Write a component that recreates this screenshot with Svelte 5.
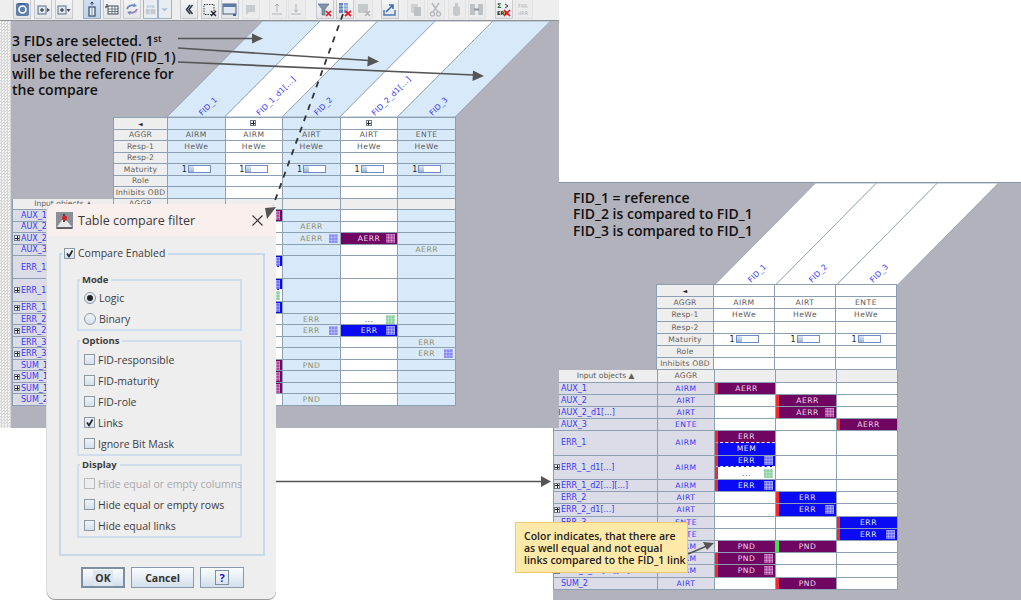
<script>
  const toolbar = [
    { x: 2, svg: `<rect x="1" y="1" width="13" height="13" rx="2" fill="#5d7ea8"/><circle cx="7.5" cy="7.5" r="3.5" fill="none" stroke="#fff" stroke-width="1.6"/><path d="M3 2h7" stroke="#33507a"/>` },
    { x: 3, svg: `<rect x="2" y="4" width="8" height="8" fill="#dfe6f0" stroke="#5a6f8c"/><path d="M4 8h4M6 6v4" stroke="#223"/><path d="M11 6l3 2-3 2z" fill="#445"/>` },
    { x: 2.5, svg: `<rect x="2" y="4" width="8" height="8" fill="#dfe6f0" stroke="#5a6f8c"/><path d="M4 8h4M6 6v4" stroke="#223"/><path d="M10.500 7h4l-2 3z" fill="#445"/>` },
    { x: 10, on: true, svg: `<rect x="5" y="5" width="6" height="9" fill="#e6edf6" stroke="#45566e" stroke-width="1.300"/><path d="M8 5v9" stroke="#7f92ab"/><path d="M8 0v3M6.500 1.500L8 0l1.500 1.500" stroke="#26364a" fill="none"/>` },
    { x: 2, svg: `<rect x="4" y="4" width="10" height="8" fill="#fff" stroke="#3c4c60"/><path d="M4 7h10M4 9.500h10M8 4v8M11 4v8" stroke="#3c4c60" stroke-width=".7"/><path d="M3 2v3H1" stroke="#222" fill="none"/>` },
    { x: 2, svg: `<path d="M3 7c1-3 5-5 8-3" fill="none" stroke="#6f8fc0" stroke-width="2"/><path d="M13 7c-1 3-5 5-8 3" fill="none" stroke="#9a85b8" stroke-width="2"/><path d="M10 1l3 3-4 1zM6 13l-3-3 4-1z" fill="#6f8fc0"/>` },
    { x: 2, w: 15, tint: true, svg: `<text x="7.500" y="5.500" font-size="4.500" font-family="DejaVu Sans" text-anchor="middle" fill="#aab">SYN</text><rect x="2" y="7" width="11" height="6" fill="#c4cad0"/><path d="M7 7v6" stroke="#e6e9ec"/>` },
    { x: 0, w: 14, tint: true, svg: `<path d="M3 6h8l-4 4z" fill="#a9c4de"/>` },
    { x: 8, svg: `<path d="M9 3L5.500 7.500l3.500 4.500M11.500 3L8 7.500l3.500 4.500" fill="none" stroke="#2d3542" stroke-width="1.500"/>` },
    { x: 3, svg: `<rect x="2" y="2.500" width="10" height="10" fill="none" stroke="#344" stroke-dasharray="1.500 1"/><path d="M9 9l5 5M14 9l-5 5" stroke="#223" stroke-width="1.400"/>` },
    { x: 2, svg: `<rect x="1" y="2" width="13" height="10" fill="#dfe8f2" stroke="#4a5f7c"/><rect x="1" y="2" width="13" height="3" fill="#5a7ba6"/><path d="M11 12h3v2h-3z" fill="#2a66bb"/>` },
    { x: 3, off: true, svg: `<path d="M3 3h9v7H6l-3 3z" fill="#c9cccf"/>` },
    { x: 9, off: true, svg: `<path d="M7 2v8M5 4l2-2 2 2M2 12h10" stroke="#aeb2b6" fill="none"/>` },
    { x: 1, off: true, svg: `<path d="M7 2v8M5 8l2 2 2-2M2 12h10" stroke="#aeb2b6" fill="none"/>` },
    { x: 10, svg: `<path d="M1 2h11L8 7v6H5V7z" fill="#7f93ad" stroke="#56677f" stroke-width=".6"/><path d="M9 9l5 5M14 9l-5 5" stroke="#e3192a" stroke-width="1.700"/>` },
    { x: 2, svg: `<rect x="2" y="1" width="4" height="10" fill="#5f86c4"/><rect x="7" y="1" width="4" height="10" fill="#8fa8cc"/><path d="M2 4h9M2 7h9" stroke="#fff" stroke-width=".6"/><path d="M8 9l6 5M14 9l-6 5" stroke="#e3192a" stroke-width="1.700"/>` },
    { x: 1, off: true, svg: `<rect x="2" y="2" width="10" height="9" fill="#c6c9cc"/><path d="M9 9l5 5M14 9l-5 5" stroke="#b4b4b8" stroke-width="1.600"/>` },
    { x: 8, svg: `<path d="M2 8v5h11V8" fill="none" stroke="#4d79b4" stroke-width="1.500"/><path d="M4 10l7-7M7 3h4v4" fill="none" stroke="#3b6cb0" stroke-width="1.600"/>` },
    { x: 8, off: true, svg: `<rect x="3" y="2" width="7" height="9" fill="#cfd2d5"/><rect x="6" y="5" width="7" height="9" fill="#bec1c4"/>` },
    { x: 2, off: true, svg: `<path d="M4 1l6 9M11 1L5 10" stroke="#b8bbbe" stroke-width="1.600"/><circle cx="4.500" cy="12" r="2" fill="none" stroke="#b8bbbe" stroke-width="1.400"/><circle cx="10.500" cy="12" r="2" fill="none" stroke="#b8bbbe" stroke-width="1.400"/>` },
    { x: 3, off: true, svg: `<rect x="4" y="4" width="7" height="10" rx="2" fill="#c6c9cc"/><rect x="6" y="1" width="3" height="4" fill="#c6c9cc"/>` },
    { x: 2, off: true, svg: `<rect x="1" y="2" width="5" height="11" fill="#bfc2c5"/><rect x="9" y="2" width="5" height="11" fill="#bfc2c5"/><path d="M5 7.500h5" stroke="#8f9296" stroke-width="2"/>` },
    { x: 9, svg: `<text x="1" y="6" font-size="6.500" font-family="DejaVu Sans" font-weight="700" fill="#1e6b3a">Σ</text><path d="M9 2l3 2-3 2" fill="none" stroke="#333"/><text x="1" y="13" font-size="5" font-family="DejaVu Sans" font-weight="700" fill="#222">ERR</text><path d="M8 8l6 6M14 8l-6 6" stroke="#e3192a" stroke-width="1.600"/>` },
    { x: 2, off: true, svg: `<text x="2" y="6" font-size="5" font-family="DejaVu Sans" fill="#b0b3b6">FRR</text><text x="2" y="13" font-size="5" font-family="DejaVu Sans" fill="#b0b3b6">dRR</text>` }
  ]

  const olive = (t, dots) => ({ t, kind: 'o', dots })
  const pur = (t, flag, dots) => ({ t, kind: 'p', flag, dots })
  const blu = (t, flag, dots) => ({ t, kind: 'b', flag, dots })
  const more = (flag) => ({ t: '...', kind: 'w', flag, dots: true })

  const topRows = ['◄', 'AGGR', 'Resp-1', 'Resp-2', 'Maturity', 'Role', 'Inhibits OBD']

  const leftCols = [
    { name: 'FID_1', aggr: 'AIRM', tint: true },
    { name: 'FID_1_d1[...]', aggr: 'AIRM', plus: true },
    { name: 'FID_2', aggr: 'AIRT', tint: true },
    { name: 'FID_2_d1[...]', aggr: 'AIRT', plus: true },
    { name: 'FID_3', aggr: 'ENTE', tint: true }
  ]
  const rightCols = [
    { name: 'FID_1', aggr: 'AIRM' },
    { name: 'FID_2', aggr: 'AIRT' },
    { name: 'FID_3', aggr: 'ENTE' }
  ]

  const leftRows = [
    { n: 'AUX_1', a: 'AIRM', c: [olive('AERR'), pur('AERR', 0, true)] },
    { n: 'AUX_2', a: 'AIRT', c: [0, 0, olive('AERR')] },
    { n: 'AUX_2_d1[...]', p: 1, a: 'AIRT', c: [0, 0, olive('AERR', true), pur('AERR', 0, true)] },
    { n: 'AUX_3', a: 'ENTE', c: [0, 0, 0, 0, olive('AERR')] },
    { n: 'ERR_1', a: 'AIRM', dbl: 1, c: [[olive('ERR'), olive('MEM')], [blu('ERR', 0, true), 0]] },
    { n: 'ERR_1_d1[...]', p: 1, a: 'AIRM', dbl: 1, c: [[olive('ERR'), olive('...')], [blu('ERR', 0, true), more()]] },
    { n: 'ERR_1_d2[...][...]', p: 1, a: 'AIRM', c: [olive('ERR'), blu('ERR', 0, true)] },
    { n: 'ERR_2', a: 'AIRT', c: [0, 0, olive('ERR'), more()] },
    { n: 'ERR_2_d1[...]', p: 1, a: 'AIRT', c: [0, 0, olive('ERR', true), blu('ERR', 0, true)] },
    { n: 'ERR_3', a: 'ENTE', c: [0, 0, 0, 0, olive('ERR')] },
    { n: 'ERR_3_d1[...]', p: 1, a: 'ENTE', c: [0, 0, 0, 0, olive('ERR', true)] },
    { n: 'SUM_1', a: 'AIRM', c: [olive('PND'), pur('PND', 0, true), olive('PND')] },
    { n: 'SUM_1_d1[...]', p: 1, a: 'AIRM', c: [olive('PND'), pur('PND', 0, true)] },
    { n: 'SUM_1_d2[...][...]', p: 1, a: 'AIRM', c: [olive('PND'), pur('PND', 0, true)] },
    { n: 'SUM_2', a: 'AIRT', c: [0, 0, olive('PND')] }
  ]
  const rightRows = [
    { n: 'AUX_1', a: 'AIRM', c: [pur('AERR', 'r')] },
    { n: 'AUX_2', a: 'AIRT', c: [0, pur('AERR', 'r')] },
    { n: 'AUX_2_d1[...]', p: 1, a: 'AIRT', c: [0, pur('AERR', 'r', true)] },
    { n: 'AUX_3', a: 'ENTE', c: [0, 0, pur('AERR', 'r')] },
    { n: 'ERR_1', a: 'AIRM', dbl: 1, c: [[pur('ERR', 'r'), blu('MEM', 'r')]] },
    { n: 'ERR_1_d1[...]', p: 1, a: 'AIRM', dbl: 1, c: [[blu('ERR', 'r', true), more('r')]] },
    { n: 'ERR_1_d2[...][...]', p: 1, a: 'AIRM', c: [blu('ERR', 'r', true)] },
    { n: 'ERR_2', a: 'AIRT', c: [0, blu('ERR', 'r')] },
    { n: 'ERR_2_d1[...]', p: 1, a: 'AIRT', c: [0, blu('ERR', 'r', true)] },
    { n: 'ERR_3', a: 'ENTE', c: [0, 0, blu('ERR', 'r')] },
    { n: 'ERR_3_d1[...]', p: 1, a: 'ENTE', c: [0, 0, blu('ERR', 'r', true)] },
    { n: 'SUM_1', a: 'AIRM', c: [pur('PND', 'y'), pur('PND', 'g')] },
    { n: 'SUM_1_d1[...]', p: 1, a: 'AIRM', c: [pur('PND', 'r', true)] },
    { n: 'SUM_1_d2[...][...]', p: 1, a: 'AIRM', c: [pur('PND', 'r', true)] },
    { n: 'SUM_2', a: 'AIRT', c: [0, pur('PND', 'r')] }
  ]

  function topValue(row, col) {
    if (row === 'AGGR') return col.aggr
    if (row === 'Resp-1') return 'HeWe'
    return ''
  }
  const checks = {
    options: [
      { label: 'FID-responsible' }, { label: 'FID-maturity' }, { label: 'FID-role' },
      { label: 'Links', on: true }, { label: 'Ignore Bit Mask' }
    ],
    display: [
      { label: 'Hide equal or empty columns', off: true },
      { label: 'Hide equal or empty rows' },
      { label: 'Hide equal links' }
    ]
  }
  const parallel = (x, dx, pitch, h, i) =>
    `${x + pitch * i},${h} ${x + pitch * (i + 1)},${h} ${x + pitch * (i + 1) + dx},0 ${x + pitch * i + dx},0`
</script>

{#snippet plusBox()}<span class="plus"></span>{/snippet}

{#snippet oneCell(c)}
  {#if c}
    <div class="sub {c.kind} {c.flag ? 'flag-' + c.flag : ''}">
      {c.t}
      {#if c.dots}<span class="dots"></span>{/if}
    </div>
  {/if}
{/snippet}

{#snippet table(cols, rows, cls)}
  <div class="table {cls}">
    <div class="grid top">
      {#each topRows as row}
        <div class="cell head" class:arrow={row === '◄'}>{row}</div>
        {#each cols as col}
          <div class="cell" class:tint={col.tint}>
            {#if row === '◄'}
              {#if col.plus}{@render plusBox()}{/if}
            {:else if row === 'Maturity'}
              <span class="one">1</span><span class="meter"><i></i></span>
            {:else}
              {topValue(row, col)}
            {/if}
          </div>
        {/each}
      {/each}
    </div>
    <div class="grid body">
      <div class="cell head objects">Input objects ▲</div>
      <div class="cell head">AGGR</div>
      {#each cols as col}<div class="cell head"></div>{/each}
      {#each rows as r}
        <div class="cell label" class:dbl={r.dbl}>
          {#if r.p}{@render plusBox()}{:else}<span class="noplus"></span>{/if}{r.n}
        </div>
        <div class="cell label mid" class:dbl={r.dbl}>{r.a}</div>
        {#each cols as col, i}
          {@const c = r.c[i]}
          <div class="cell data" class:tint={col.tint} class:dbl={r.dbl}>
            {#if Array.isArray(c)}
              <div class="stack">
                {@render oneCell(c[0])}
                {#if c[1]}{@render oneCell(c[1])}{/if}
              </div>
            {:else}
              {@render oneCell(c)}
            {/if}
          </div>
        {/each}
      {/each}
    </div>
  </div>
{/snippet}

{#snippet checkRow(item)}
  <div class="check" class:off={item.off}>
    <span class="box">{#if item.on}<svg viewBox="0 0 11 11" width="11" height="11"><path d="M3 5.500l2 3 3.500-6" fill="none" stroke="#222" stroke-width="1.700"/></svg>{/if}</span>
    {item.label}
  </div>
{/snippet}

<div class="page">
  <section class="panel right">
    <svg class="fan" width="467" height="103">
      {#each rightCols as col, i}
        <polygon points={parallel(161.500, 101, 61, 102, i)} fill="#fff" stroke="#8f9fb0" stroke-width=".8" />
        <text class="fid" transform="translate({198 + 61 * i},100) rotate(-45)">{col.name}</text>
      {/each}
    </svg>
    <div class="note">FID_1 = reference<br />FID_2 is compared to FID_1<br />FID_3 is compared to FID_1</div>
    {@render table(rightCols, rightRows, 'big')}
  </section>

  <section class="panel left">
    <div class="toolbar">
      {#each toolbar as b}
        <span class="tool" class:on={b.on} class:off={b.off} class:tinted={b.tint} style="margin-left:{b.x}px;width:{b.w || 18}px">
          <svg viewBox="0 0 15 15" width="15" height="15">{@html b.svg}</svg>
        </span>
      {/each}
    </div>
    <div class="under">
      <div class="strip"></div>
      <div class="sheet">
        <svg class="fan" width="548" height="97">
          {#each leftCols as col, i}
            <polygon points={parallel(156, 95.500, 57.600, 96, i)} fill={col.tint ? '#d8e9fa' : '#fff'} stroke="#8f9fb0" stroke-width=".8" />
            <text class="fid" transform="translate({191 + 57.600 * i},95) rotate(-45)">{col.name}</text>
          {/each}
        </svg>
        <div class="note">3 FIDs are selected. 1<sup>st</sup><br />user selected FID (FID_1)<br />will be the reference for<br />the compare</div>
        {@render table(leftCols, leftRows, 'small')}
      </div>
    </div>
  </section>

  <svg class="marks" width="1021" height="600">
    <g stroke="#555" stroke-width="1.600" fill="#555">
      <path d="M178 38.500H253" />
      <path d="M263 38.500l-11-5v10z" stroke="none" />
      <path d="M178 48L369 60.500" />
      <path d="M379 61.500l-11-5.500-.7 10.500z" stroke="none" />
      <path d="M178 62L474 75" />
      <path d="M484 76l-11-5.500-.5 10.500z" stroke="none" />
      <path d="M343 14L273 206" fill="none" stroke-dasharray="6 6" stroke-width="1.800" stroke="#333" />
      <path d="M276 481.500H542" />
      <path d="M551 481.500l-10-5.500v11z" stroke="none" />
    </g>
  </svg>

  <aside class="dialog">
    <header>
      <svg class="appicon" viewBox="0 0 17 17" width="17" height="17">
        <rect width="17" height="17" fill="#8b8f96" />
        <path d="M1 15l5-7 5 1 5 6z" fill="#e8e8ea" />
        <path d="M8 2v8" stroke="#222" stroke-width="1.500" />
        <circle cx="8.500" cy="6" r="2.500" fill="#d8222a" />
        <path d="M1 16h15" stroke="#333" />
      </svg>
      <span class="title">Table compare filter</span>
      <svg class="close" viewBox="0 0 11 11" width="11" height="11"><path d="M.5.5l10 10M10.500.5l-10 10" stroke="#333" stroke-width="1.100" /></svg>
    </header>
    <div class="content">
      <fieldset class="outer">
        <legend>{@render checkRow({ label: 'Compare Enabled', on: true })}</legend>
        <fieldset>
          <legend>Mode</legend>
          <div class="check"><span class="radio sel"></span>Logic</div>
          <div class="check"><span class="radio"></span>Binary</div>
        </fieldset>
        <fieldset class="lower">
          <legend>Options</legend>
          {#each checks.options as item}{@render checkRow(item)}{/each}
        </fieldset>
        <fieldset class="lower">
          <legend>Display</legend>
          {#each checks.display as item}{@render checkRow(item)}{/each}
        </fieldset>
      </fieldset>
      <div class="buttons">
        <span class="btn ok"><b>OK</b></span>
        <span class="btn cancel">Cancel</span>
        <span class="btn help"><i>?</i></span>
      </div>
    </div>
  </aside>

  <svg class="marks top" width="1021" height="600">
    <path d="M265 208l11-1-9 12z" fill="#555" />
    <path d="M688 554L707 546" stroke="#555" stroke-width="1.600" />
    <path d="M714 543l-11-1 4 8z" fill="#555" />
  </svg>

  <div class="callout">Color indicates, that there are<br />as well equal and not equal<br />links compared to the FID_1 link</div>
</div>

<style>
  :global(body) { margin: 0; background: #fff; }
  .page {
    position: relative;
    width: 1021px;
    height: 600px;
    overflow: hidden;
    background: #fff;
    font-family: "DejaVu Sans", sans-serif;
  }
  .panel { position: absolute; overflow: hidden; }
  .panel.left { left: 0; top: 0; width: 559px; height: 428px; display: flex; flex-direction: column; }
  .panel.right {
    left: 553px; top: 182px; right: 0; bottom: 0;
    background: #b2b2bd;
    padding-top: 102px;
    box-sizing: border-box;
  }
  .panel.right::before {
    content: "";
    position: absolute;
    left: 0; right: 0; top: 0;
    height: 1px;
    background: #8a97a5;
  }

  .toolbar {
    height: 20px;
    flex: none;
    display: flex;
    padding-left: 11px;
    background: #eeeeef;
    border-bottom: 1px solid #8d9197;
  }
  .tool {
    height: 19px;
    box-sizing: border-box;
    border: 1px solid #c8cace;
    border-top: 0;
    background: linear-gradient(#f4f4f5, #e4e5e7);
    display: flex;
    align-items: center;
    justify-content: center;
    flex: none;
  }
  .tool.on { background: linear-gradient(#cfdff2, #bcd2ea); border-color: #9db0c6; }
  .tool.off { background: #ececed; border-color: #e0e1e3; }
  .tool.tinted { background: #e8edf2; border-color: #9fb2c6; }

  .under { flex: 1; display: flex; min-height: 0; }
  .strip {
    width: 11px;
    flex: none;
    background: repeating-conic-gradient(#d5d5d6 0 25%, #f3f3f4 0 50%) 0 0 / 3px 3px;
  }
  .sheet {
    flex: 1;
    position: relative;
    background: #b2b2bd;
    padding: 96px 0 0 1px;
    overflow: hidden;
  }
  .fan { position: absolute; left: 0; top: 0; }
  .panel.right .fan { top: 1px; }
  .fid { font-size: 7.600px; fill: #3535ff; letter-spacing: .3px; }

  .note {
    position: absolute;
    font-family: "Open Sans", sans-serif;
    font-weight: 600;
    font-size: 14px;
    line-height: 16.400px;
    color: #111;
    white-space: nowrap;
  }
  .sheet .note { left: 1px; top: 12px; }
  .panel.right .note { left: 20px; top: 8px; }
  sup { font-size: 9px; line-height: 0; vertical-align: 4px; }

  .table { position: relative; font-size: 7.600px; letter-spacing: .5px; color: #5a5a5a; }
  .grid {
    display: grid;
    gap: 1px;
    padding: 1px;
    background: #8c9fb3;
    width: max-content;
    grid-auto-rows: var(--u);
  }
  .grid.body { padding-top: 0; }
  .small { --u: 10.530px; }
  .big { --u: 11.200px; }
  .small .top { margin-left: 101px; grid-template-columns: 53px repeat(5, 56.600px); }
  .small .body { grid-template-columns: 100px 53px repeat(5, 56.600px); }
  .big .top { margin-left: 103px; grid-template-columns: 56px repeat(3, 60px); }
  .big .body { grid-template-columns: 103px 56px repeat(3, 60px); }

  .cell {
    background: #fff;
    min-width: 0;
    display: flex;
    align-items: center;
    justify-content: center;
    white-space: nowrap;
    overflow: hidden;
    position: relative;
  }
  .cell.tint { background: #d8e9fa; }
  .cell.head { background: #eeeeee; color: #665f58; letter-spacing: .2px; }
  .cell.objects { font-size: 7.600px; letter-spacing: 0; }
  .cell.arrow { font-size: 6px; color: #222; }
  .cell.dbl { grid-row: span 2; }
  .cell.label { background: #dcdce8; color: #3535ff; justify-content: flex-start; font-size: 8px; letter-spacing: 0; }
  .small .cell.label { padding-left: 1px; }
  .cell.label.mid { justify-content: center; padding: 0; font-size: 7.600px; letter-spacing: .5px; }
  .noplus { width: 7px; flex: none; }
  .plus {
    width: 4px;
    height: 4px;
    margin-right: 1px;
    flex: none;
    border: 1px solid #6e7a8a;
    background:
      linear-gradient(#222, #222) center / 4px 1px no-repeat,
      linear-gradient(#222, #222) center / 1px 4px no-repeat,
      #f4f4f4;
  }
  .cell.data { align-items: stretch; justify-content: stretch; flex-direction: column; }
  .stack { flex: 1; display: flex; flex-direction: column; min-height: 0; }
  .stack .sub { flex: 0 0 50%; }
  .stack .sub:first-child { border-bottom: 1px dashed #fff; }
  .sub {
    flex: 1;
    display: flex;
    align-items: center;
    justify-content: center;
    position: relative;
    box-sizing: border-box;
    min-height: 0;
  }
  .sub.o { color: #8b8f63; --dot: #8a8afa; }
  .sub.p { background: #700662; color: #f0dcec; --dot: #ad4aa2; }
  .sub.b { background: #0a0af5; color: #e6e6ff; --dot: #6f6fff; }
  .sub.w { background: #fff; color: #444; --dot: #8fd1a3; }
  .flag-r { border-left: 3px solid #f02a33; }
  .flag-g { border-left: 3px solid #41e04b; }
  .flag-y { border-left: 3px solid #fbf1cf; }
  .dots {
    position: absolute;
    right: 2px;
    top: 50%;
    width: 9px;
    height: 9px;
    margin-top: -4.500px;
    background:
      repeating-linear-gradient(90deg, transparent 0 2px, rgba(255,255,255,.25) 2px 3px),
      repeating-linear-gradient(0deg, transparent 0 2px, rgba(255,255,255,.25) 2px 3px),
      var(--dot);
  }
  .one { font-size: 8px; color: #222; letter-spacing: 0; margin-right: 1px; }
  .meter {
    width: 21px;
    height: 6px;
    border: 1px solid #6f8cc6;
    background: #fff;
    display: flex;
  }
  .meter i { width: 5px; background: linear-gradient(#dfe8f2, #9db3cf); }

  .marks { position: absolute; left: 0; top: 0; pointer-events: none; }

  .dialog {
    position: absolute;
    left: 47px;
    top: 204px;
    width: 229px;
    height: 395px;
    background: #eeeeee;
    border-radius: 8px;
    box-shadow: 0 1px 0 #9a9a9a, -1px 0 0 #dcdcdc;
    overflow: hidden;
    font-family: "Open Sans", sans-serif;
    font-size: 10.500px;
    color: #3c3c40;
    display: flex;
    flex-direction: column;
  }
  header {
    height: 32px;
    flex: none;
    background: #f9efed;
    display: flex;
    align-items: center;
    padding: 0 13px 0 9px;
  }
  .appicon { margin-right: 5px; }
  .title { font-size: 12.500px; flex: 1; color: #3a3a3e; }
  .content { flex: 1; padding: 11px 11px 0 12px; display: flex; flex-direction: column; }
  fieldset {
    margin: 0 0 3px;
    padding: 1px 0 0 5px;
    border: 2px solid #cfdded;
    min-width: 0;
  }
  fieldset.lower { padding-top: 2px; margin-bottom: 2px; }
  legend {
    padding: 0 3px 0 2px;
    margin-left: -4px;
    font-weight: 700;
    font-size: 9.500px;
    line-height: 13px;
  }
  fieldset.outer {
    height: 309px;
    margin: 0;
    box-sizing: border-box;
    padding: 13px 21px 0 16px;
    border-color: #c8d9ea;
  }
  .outer > legend { font-weight: 400; font-size: 10.500px; margin-left: -15px; }
  .outer > legend .check { height: 13px; }
  .check { height: 21px; display: flex; align-items: center; white-space: nowrap; }
  .box, .radio {
    width: 11px;
    height: 11px;
    flex: none;
    margin-right: 3px;
    box-sizing: border-box;
    border: 1px solid #8e99a6;
    background: linear-gradient(#eef3f9, #d5e0ec);
    display: block;
  }
  .box svg { display: block; margin: -1px; }
  .radio { width: 12px; height: 12px; border-radius: 50%; position: relative; }
  .radio.sel::after {
    content: "";
    position: absolute;
    inset: 2px;
    border-radius: 50%;
    background: #222;
  }
  .check.off { color: #a9a9ad; }
  .check.off .box { background: #eee; border-color: #b9bcbf; }
  .buttons { display: flex; gap: 6px; padding: 11px 0 0 22px; }
  .btn {
    height: 21px;
    box-sizing: border-box;
    border: 1px solid #8a9aab;
    background: linear-gradient(#fafcfe, #d3dfeb);
    display: flex;
    align-items: center;
    justify-content: center;
    font-weight: 700;
    font-size: 10.500px;
    color: #333;
  }
  .btn.ok { width: 44px; border-width: 2px; border-color: #7d8ea0; }
  .btn.ok b { font-weight: 700; padding: 1px 2px; background: #dde7f1; }
  .btn.cancel { width: 63px; }
  .btn.help { width: 44px; }
  .btn.help i {
    font-style: normal;
    font-weight: 700;
    color: #1414c8;
    font-size: 11px;
    width: 12px;
    height: 13px;
    border: 1px solid #7d8ea0;
    text-align: center;
    line-height: 13px;
  }

  .callout {
    position: absolute;
    left: 515px;
    top: 522px;
    width: 173px;
    height: 51px;
    box-sizing: border-box;
    padding: 7px 0 0 8px;
    background: #ffe9a8;
    border: 1px solid #ecca6d;
    font-family: "Open Sans", sans-serif;
    font-weight: 600;
    font-size: 10.500px;
    line-height: 12.200px;
    color: #222;
    white-space: nowrap;
  }
</style>
